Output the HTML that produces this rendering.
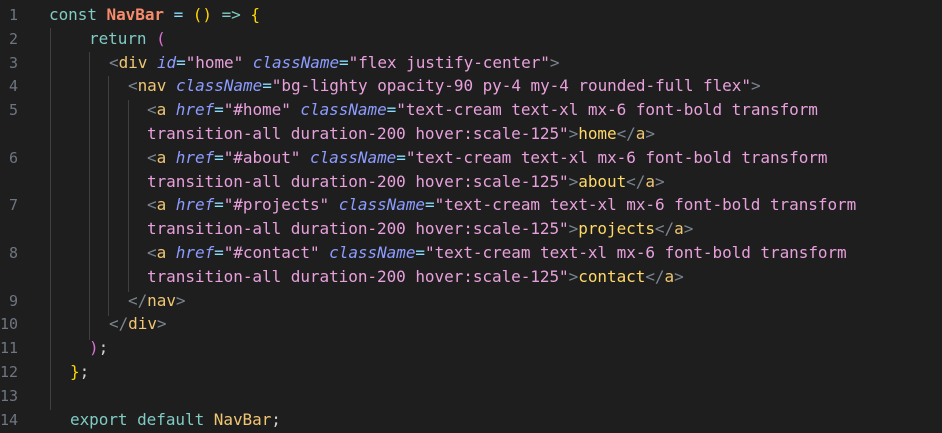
<!DOCTYPE html>
<html><head><style>
body{margin:0;background:#1e1e1e;width:942px;height:433px;overflow:hidden;position:relative;font-family:"DejaVu Sans Mono","Liberation Mono",monospace;font-size:16px}
.ln{position:absolute;left:0;width:18px;text-align:right;color:#6e7681;font-size:15px}
.l{position:absolute;white-space:pre;color:#d4d4d4;letter-spacing:-0.05px}
.g{position:absolute;width:1px;background:#404040}
.k{color:#80cbc4}.f{color:#f78c6c;font-weight:bold}.o{color:#89ddff}
.b1{color:#ffd700}.b2{color:#da70d6}.p{color:#7a8590}.t{color:#f0c674}
.a{color:#8c9cff;font-style:italic}.s{color:#e8a0dc}.y{color:#ffd866}.w{color:#d4d4d4}
</style></head><body>
<div class="g" style="left:50px;top:28px;height:382px"></div>
<div class="g" style="left:89px;top:52px;height:288px"></div>
<div class="g" style="left:108px;top:76px;height:240px"></div>
<div class="g" style="left:128px;top:100px;height:192px"></div>

<div class="ln" style="top:6px">1</div>
<div class="ln" style="top:30px">2</div>
<div class="ln" style="top:54px">3</div>
<div class="ln" style="top:77px">4</div>
<div class="ln" style="top:101px">5</div>
<div class="ln" style="top:149px">6</div>
<div class="ln" style="top:196px">7</div>
<div class="ln" style="top:244px">8</div>
<div class="ln" style="top:292px">9</div>
<div class="ln" style="top:315px">10</div>
<div class="ln" style="top:339px">11</div>
<div class="ln" style="top:363px">12</div>
<div class="ln" style="top:387px">13</div>
<div class="ln" style="top:411px">14</div>

<div class="l" style="left:49px;top:5px"><span class="k">const</span> <span class="f">NavBar</span> <span class="o">=</span> <span class="b1">()</span> <span class="k">=&gt;</span> <span class="b1">{</span></div>
<div class="l" style="left:89px;top:29px"><span class="k">return</span> <span class="b2">(</span></div>
<div class="l" style="left:109px;top:53px"><span class="p">&lt;</span><span class="t">div</span> <span class="a">id</span><span class="o">=</span><span class="s">"home"</span> <span class="a">className</span><span class="o">=</span><span class="s">"flex justify-center"</span><span class="p">&gt;</span></div>
<div class="l" style="left:128px;top:76px"><span class="p">&lt;</span><span class="t">nav</span> <span class="a">className</span><span class="o">=</span><span class="s">"bg-lighty opacity-90 py-4 my-4 rounded-full flex"</span><span class="p">&gt;</span></div>

<div class="l" style="left:147px;top:100px"><span class="p">&lt;</span><span class="t">a</span> <span class="a">href</span><span class="o">=</span><span class="s">"#home"</span> <span class="a">className</span><span class="o">=</span><span class="s">"text-cream text-xl mx-6 font-bold transform</span></div>
<div class="l" style="left:147px;top:124px"><span class="s">transition-all duration-200 hover:scale-125"</span><span class="p">&gt;</span><span class="y">home</span><span class="p">&lt;/</span><span class="t">a</span><span class="p">&gt;</span></div>
<div class="l" style="left:147px;top:148px"><span class="p">&lt;</span><span class="t">a</span> <span class="a">href</span><span class="o">=</span><span class="s">"#about"</span> <span class="a">className</span><span class="o">=</span><span class="s">"text-cream text-xl mx-6 font-bold transform</span></div>
<div class="l" style="left:147px;top:172px"><span class="s">transition-all duration-200 hover:scale-125"</span><span class="p">&gt;</span><span class="y">about</span><span class="p">&lt;/</span><span class="t">a</span><span class="p">&gt;</span></div>
<div class="l" style="left:147px;top:195px"><span class="p">&lt;</span><span class="t">a</span> <span class="a">href</span><span class="o">=</span><span class="s">"#projects"</span> <span class="a">className</span><span class="o">=</span><span class="s">"text-cream text-xl mx-6 font-bold transform</span></div>
<div class="l" style="left:147px;top:219px"><span class="s">transition-all duration-200 hover:scale-125"</span><span class="p">&gt;</span><span class="y">projects</span><span class="p">&lt;/</span><span class="t">a</span><span class="p">&gt;</span></div>
<div class="l" style="left:147px;top:243px"><span class="p">&lt;</span><span class="t">a</span> <span class="a">href</span><span class="o">=</span><span class="s">"#contact"</span> <span class="a">className</span><span class="o">=</span><span class="s">"text-cream text-xl mx-6 font-bold transform</span></div>
<div class="l" style="left:147px;top:267px"><span class="s">transition-all duration-200 hover:scale-125"</span><span class="p">&gt;</span><span class="y">contact</span><span class="p">&lt;/</span><span class="t">a</span><span class="p">&gt;</span></div>

<div class="l" style="left:128px;top:291px"><span class="p">&lt;/</span><span class="t">nav</span><span class="p">&gt;</span></div>
<div class="l" style="left:109px;top:314px"><span class="p">&lt;/</span><span class="t">div</span><span class="p">&gt;</span></div>
<div class="l" style="left:89px;top:338px"><span class="b2">)</span><span class="w">;</span></div>
<div class="l" style="left:70px;top:362px"><span class="b1">}</span><span class="w">;</span></div>
<div class="l" style="left:70px;top:410px"><span class="k">export</span> <span class="k">default</span> <span class="t">NavBar</span><span class="w">;</span></div>
</body></html>
